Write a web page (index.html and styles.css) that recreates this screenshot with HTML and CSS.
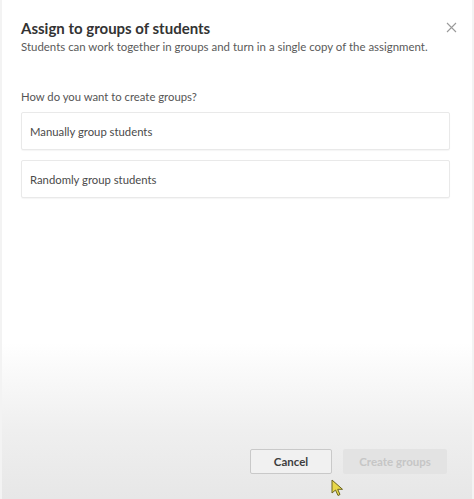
FILE: index.html
```html
<!DOCTYPE html>
<html>
<head>
<meta charset="utf-8">
<link rel="stylesheet" href="styles.css">
</head>
<body>
<div class="dialog">
  <div class="header">
    <div class="titles">
      <h1 class="title">Assign to groups of students</h1>
      <p class="subtitle">Students can work together in groups and turn in a single copy of the assignment.</p>
    </div>
    <button class="close" aria-label="Close">
      <svg width="11" height="11" viewBox="0 0 11 11"><path d="M1 1L10 10M10 1L1 10" stroke="#9a9a9a" stroke-width="1.1" fill="none"/></svg>
    </button>
  </div>
  <div class="body">
    <p class="question">How do you want to create groups?</p>
    <div class="option">Manually group students</div>
    <div class="option">Randomly group students</div>
  </div>
  <div class="footer">
    <button class="btn cancel">Cancel</button>
    <button class="btn primary" disabled>Create groups</button>
  </div>
  <svg class="cursor" width="14" height="18" viewBox="0 0 14 18"><path d="M1 1L1 14L4.5 11L7 16.5L9 15.5L6.7 10.3L11.5 10.3Z" fill="#e8d84a" stroke="#6b6420" stroke-width="1"/></svg>
</div>
</body>
</html>
```
FILE: styles.css
```css
html, body {
  margin: 0;
  padding: 0;
  height: 100%;
}
body {
  font-family: "Lato", "Open Sans", sans-serif;
  color: #333;
  background: #fff;
}
.dialog {
  position: relative;
  box-sizing: border-box;
  height: 499px;
  display: flex;
  flex-direction: column;
  padding: 0 22px 0 19px;
  background: linear-gradient(to bottom, #fff 0, #fff 343px, #f8f8f8 380px, #efefef 430px, #e7e7e7 499px);
  border-left: 2px solid #f3f3f3;
  border-right: 2px solid #f3f3f3;
}
.header {
  display: flex;
  justify-content: space-between;
  align-items: flex-start;
  padding-top: 18px;
}
.title {
  margin: 0;
  font-size: 15px;
  font-weight: 700;
  line-height: 21px;
  color: #333;
}
.subtitle {
  margin: 0;
  font-size: 11.45px;
  line-height: 16px;
  color: #5a5a5a;
  white-space: nowrap;
}
.close {
  border: 0;
  background: none;
  padding: 0;
  margin: 4px -7px 0 0;
  width: 11px;
  height: 11px;
  display: flex;
}
.body {
  flex: 1;
  padding-top: 34px;
}
.question {
  margin: 0 0 7px 0;
  font-size: 11.3px;
  line-height: 16px;
  color: #555;
}
.option {
  box-sizing: border-box;
  height: 38px;
  border: 1px solid #e9e9e9;
  border-radius: 2px;
  box-shadow: 0 1px 1px rgba(0,0,0,0.04);
  display: flex;
  align-items: center;
  padding-left: 8px;
  font-size: 11.3px;
  color: #4a4a4a;
  margin-bottom: 10px;
  background: #fff;
}
.footer {
  display: flex;
  justify-content: flex-end;
  gap: 11px;
  padding-bottom: 25px;
  margin-right: 3px;
}
.btn {
  font-family: inherit;
  font-size: 11.5px;
  font-weight: 700;
  height: 25px;
  border-radius: 2px;
  padding: 0;
}
.cancel {
  width: 82px;
  border: 1px solid #c9c9c9;
  background: #f1f1f1;
  color: #3e3e3e;
}
.primary {
  width: 104px;
  border: 0;
  background: #e3e3e3;
  color: #c6c6c6;
}
.cursor {
  position: absolute;
  left: 329px;
  top: 479px;
}
```
